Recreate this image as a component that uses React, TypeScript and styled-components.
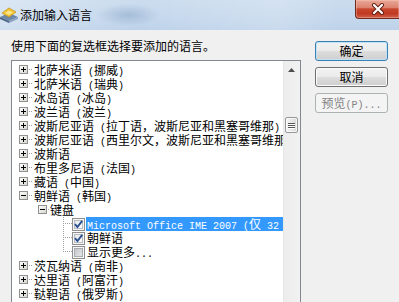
import React from 'react'
import styled, { createGlobalStyle } from 'styled-components'

const GlobalStyle = createGlobalStyle`
  html, body {
    margin: 0;
    padding: 0;
    overflow: hidden;
    background: #f0f0f0;
  }

  body {
    font-family: "Noto Sans CJK SC", "Liberation Sans", sans-serif;
    font-size: 12px;
    color: #000;
  }
`

const Dialog = styled.div`
  width: 399px;
  height: 302px;
  overflow: hidden;
  display: flex;
  flex-direction: column;
  background: #f0f0f0;
`

const TitleBar = styled.div`
  height: 30px;
  flex-shrink: 0;
  display: flex;
  align-items: flex-start;
  background:
    radial-gradient(ellipse 32px 11px at 128px 15px, rgba(140, 166, 200, 0.55), rgba(140, 166, 200, 0) 100%),
    linear-gradient(90deg, rgba(255, 255, 255, 0.3), rgba(255, 255, 255, 0) 35%, rgba(255, 255, 255, 0.18) 70%, rgba(255, 255, 255, 0) 85%),
    linear-gradient(180deg, #cbdcee 0%, #c4d7ec 60%, #bdd2ea 100%);
`

const AppIcon = styled.svg`
  flex-shrink: 0;
  margin-top: 7px;
`

const TitleText = styled.div`
  margin: 8px 0 0 2px;
  line-height: 14px;
  font-size: 12px;
  white-space: nowrap;
`

const CloseButton = styled.div`
  margin-left: auto;
  width: 44px;
  height: 19px;
  box-sizing: border-box;
  border: 1px solid #6e2a1e;
  border-top: none;
  border-right: none;
  border-radius: 0 0 0 4px;
  background: linear-gradient(180deg, #e9a898 0%, #dc8470 42%, #c8452c 50%, #c03a22 75%, #d2604a 100%);
  box-shadow: inset 0 0 0 1px rgba(255, 214, 204, 0.35);
  display: flex;
  align-items: center;
  justify-content: center;
`

const Body = styled.div`
  flex: 1;
  min-height: 0;
  display: flex;
`

const LeftColumn = styled.div`
  width: 290px;
  padding: 9px 0 0 11px;
  display: flex;
  flex-direction: column;
`

const Prompt = styled.div`
  line-height: 14px;
  margin-bottom: 7px;
  white-space: nowrap;
`

const ListBox = styled.div`
  height: 260px;
  flex-shrink: 0;
  box-sizing: border-box;
  border: 1px solid #828790;
  background: #fff;
  display: flex;
`

const Tree = styled.div`
  flex: 1;
  min-width: 0;
  overflow: hidden;
  padding-top: 2px;
`

const Row = styled.div<{ $indent: number }>`
  display: flex;
  align-items: center;
  height: 14px;
  padding-left: ${p => p.$indent}px;
  white-space: nowrap;
`

const Glyph = styled.svg`
  flex-shrink: 0;
  display: block;
`

const Label = styled.span<{ $selected?: boolean; $gap?: number }>`
  flex-shrink: 0;
  display: inline-block;
  height: 14px;
  line-height: 14px;
  padding: 0 1px;
  margin-left: ${p => p.$gap ?? 0}px;
  background: ${p => (p.$selected ? '#3399ff' : 'transparent')};
  color: ${p => (p.$selected ? '#fff' : '#000')};
`

const Latin = styled.span`
  font-family: "Liberation Mono", monospace;
  font-size: 10px;
`

const ScrollBar = styled.div`
  width: 17px;
  flex-shrink: 0;
  display: flex;
  flex-direction: column;
  align-items: center;
  background: linear-gradient(90deg, #e3e3e3 0, #ededed 1px, #f1f1f1 100%);
`

const ArrowButton = styled.div`
  width: 17px;
  height: 17px;
  display: flex;
  align-items: center;
  justify-content: center;
`

const Thumb = styled.div`
  width: 13px;
  height: 16px;
  margin-top: 39px;
  margin-right: 1px;
  box-sizing: border-box;
  border: 1px solid #979797;
  border-radius: 2px;
  background: linear-gradient(90deg, #f4f4f4 0%, #e8e8e8 50%, #d8d8d8 100%);
  box-shadow: inset 0 0 0 1px rgba(255, 255, 255, 0.7);
  display: flex;
  flex-direction: column;
  align-items: center;
  justify-content: center;
  gap: 1px;
`

const Grip = styled.div`
  width: 7px;
  height: 1px;
  background: #555;
  box-shadow: 0 1px 0 #fff;
`

const RightColumn = styled.div`
  margin-left: 14px;
  padding-top: 11px;
  display: flex;
  flex-direction: column;
  gap: 6px;
`

const ActionButton = styled.button<{ $default?: boolean }>`
  box-sizing: border-box;
  width: 73px;
  height: 20px;
  padding: 0;
  margin: 0;
  border: 1px solid ${p => (p.$default ? '#3c7fb1' : '#707070')};
  border-radius: 3px;
  background: linear-gradient(180deg, #f2f2f2 0%, #ebebeb 50%, #dddddd 51%, #cfcfcf 100%);
  box-shadow: inset 0 0 0 1px ${p => (p.$default ? '#bfe4f7' : '#fcfcfc')};
  font-family: "Noto Sans CJK SC", sans-serif;
  font-size: 12px;
  line-height: 18px;
  color: #000;
  text-align: center;

  &:disabled {
    border-color: #adb2b5;
    background: #f4f4f4;
    box-shadow: none;
    color: #838383;
  }
`

// splits a label so that ASCII runs get the narrow SimSun-like mono face
const Mixed: React.FC<{ text: string }> = ({ text }) => {
  const parts = text.split(/([\x20-\x7e]+)/).filter(Boolean)
  return (
    <>
      {parts.map((part, i) =>
        /^[\x20-\x7e]+$/.test(part) ? <Latin key={i}>{part}</Latin> : <React.Fragment key={i}>{part}</React.Fragment>,
      )}
    </>
  )
}

const Dots: React.FC<{ from: number; to: number; y: number }> = ({ from, to, y }) => {
  const out = []
  for (let x = from; x <= to; x += 2) out.push(<rect key={x} x={x} y={y} width={1} height={1} fill="#a0a0a0" />)
  return <>{out}</>
}

const Expander: React.FC<{ open: boolean; tail: number }> = ({ open, tail }) => (
  <Glyph width={9 + tail} height={14} viewBox={`0 0 ${9 + tail} 14`}>
    <defs>
      <linearGradient id="expBg" x1="0" y1="0" x2="1" y2="1">
        <stop offset="0" stopColor="#ffffff" />
        <stop offset="1" stopColor="#d4d4cc" />
      </linearGradient>
    </defs>
    <rect x={0.5} y={2.5} width={8} height={8} fill="url(#expBg)" stroke="#919191" />
    <path d="M2 6.5h5" stroke="#000" />
    {!open && <path d="M4.5 4v5" stroke="#000" />}
    <Dots from={10} to={8 + tail} y={6} />
  </Glyph>
)

const Branch: React.FC<{ last?: boolean }> = ({ last }) => {
  const vertical = []
  for (let y = 0; y <= (last ? 6 : 13); y += 2) vertical.push(<rect key={y} x={0} y={y} width={1} height={1} fill="#a0a0a0" />)
  return (
    <Glyph width={9} height={14} viewBox="0 0 9 14">
      {vertical}
      <Dots from={2} to={8} y={6} />
    </Glyph>
  )
}

const CheckBox: React.FC<{ checked?: boolean }> = ({ checked }) => (
  <Glyph width={13} height={13} viewBox="0 0 13 13">
    <defs>
      <linearGradient id="cbOn" x1="0" y1="0" x2="1" y2="1">
        <stop offset="0" stopColor="#e4e6e9" />
        <stop offset="1" stopColor="#ffffff" />
      </linearGradient>
      <linearGradient id="cbOff" x1="0" y1="0" x2="1" y2="1">
        <stop offset="0" stopColor="#c2c4c7" />
        <stop offset="1" stopColor="#e8e8e8" />
      </linearGradient>
    </defs>
    <rect x={0.5} y={0.5} width={12} height={12} fill="#f6f6f6" stroke="#8f8f8f" />
    <rect x={2.5} y={2.5} width={8} height={8} fill={checked ? 'url(#cbOn)' : 'url(#cbOff)'} stroke={checked ? '#b8bcc2' : '#a9adb2'} />
    {checked && <path d="M3 6.2 L5.4 9 L10.2 2.8" fill="none" stroke="#2a4f8f" strokeWidth={1.9} />}
  </Glyph>
)

type Item = {
  level: 0 | 1 | 2
  text: string
  open?: boolean
  checked?: boolean
  selected?: boolean
  last?: boolean
}

const items: Item[] = [
  { level: 0, text: '北萨米语 (挪威)' },
  { level: 0, text: '北萨米语 (瑞典)' },
  { level: 0, text: '冰岛语 (冰岛)' },
  { level: 0, text: '波兰语 (波兰)' },
  { level: 0, text: '波斯尼亚语 (拉丁语，波斯尼亚和黑塞哥维那)' },
  { level: 0, text: '波斯尼亚语 (西里尔文，波斯尼亚和黑塞哥维那)' },
  { level: 0, text: '波斯语' },
  { level: 0, text: '布里多尼语 (法国)' },
  { level: 0, text: '藏语 (中国)' },
  { level: 0, text: '朝鲜语 (韩国)', open: true },
  { level: 1, text: '键盘', open: true },
  { level: 2, text: 'Microsoft Office IME 2007 (仅 32 位)', checked: true, selected: true },
  { level: 2, text: '朝鲜语', checked: true },
  { level: 2, text: '显示更多...', last: true },
  { level: 0, text: '茨瓦纳语 (南非)' },
  { level: 0, text: '达里语 (阿富汗)' },
  { level: 0, text: '鞑靼语 (俄罗斯)' },
  { level: 0, text: '丹麦语 (丹麦)' },
]

const indentFor = [7, 26, 51]

const TreeRow: React.FC<{ item: Item }> = ({ item }) => {
  if (item.level === 2) {
    return (
      <Row $indent={indentFor[2]}>
        <Branch last={item.last} />
        <CheckBox checked={item.checked} />
        <Label $selected={item.selected} $gap={1}>
          <Mixed text={item.text} />
        </Label>
      </Row>
    )
  }
  return (
    <Row $indent={indentFor[item.level]}>
      <Expander open={!!item.open} tail={item.level === 0 ? 5 : 2} />
      <Label>
        <Mixed text={item.text} />
      </Label>
    </Row>
  )
}

const App: React.FC = () => {
  return (
    <>
      <GlobalStyle />
      <Dialog>
        <TitleBar>
          <AppIcon width={18} height={16} viewBox="0 0 18 16">
            <polygon points="0,10 9,6 18,10 9,14" fill="#6d87a8" />
            <polygon points="0,10 9,14 9,16 0,12" fill="#4c6586" />
            <polygon points="9,14 18,10 18,12 9,16" fill="#8aa2c0" />
            <polygon points="2,6 9,1 16,5 9,10" fill="#f3c534" stroke="#c9951a" strokeWidth={0.8} />
            <polygon points="5,6 9,3.5 13,5.5 9,8" fill="#fbe58a" />
          </AppIcon>
          <TitleText>添加输入语言</TitleText>
          <CloseButton>
            <svg width={14} height={12} viewBox="0 0 14 12">
              <path d="M3 2 L11 10 M11 2 L3 10" stroke="#5e1c12" strokeWidth={4} strokeLinecap="round" />
              <path d="M3 2 L11 10 M11 2 L3 10" stroke="#ffffff" strokeWidth={2.2} strokeLinecap="round" />
            </svg>
          </CloseButton>
        </TitleBar>
        <Body>
          <LeftColumn>
            <Prompt>使用下面的复选框选择要添加的语言。</Prompt>
            <ListBox>
              <Tree>
                {items.map((item, i) => (
                  <TreeRow key={i} item={item} />
                ))}
              </Tree>
              <ScrollBar>
                <ArrowButton>
                  <svg width={7} height={4} viewBox="0 0 7 4">
                    <path d="M0 4 L3.5 0 L7 4 Z" fill="#4d4d4d" />
                  </svg>
                </ArrowButton>
                <Thumb>
                  <Grip />
                  <Grip />
                  <Grip />
                </Thumb>
              </ScrollBar>
            </ListBox>
          </LeftColumn>
          <RightColumn>
            <ActionButton $default>确定</ActionButton>
            <ActionButton>取消</ActionButton>
            <ActionButton disabled>
              预览<Latin>(P)...</Latin>
            </ActionButton>
          </RightColumn>
        </Body>
      </Dialog>
    </>
  )
}

export default App
